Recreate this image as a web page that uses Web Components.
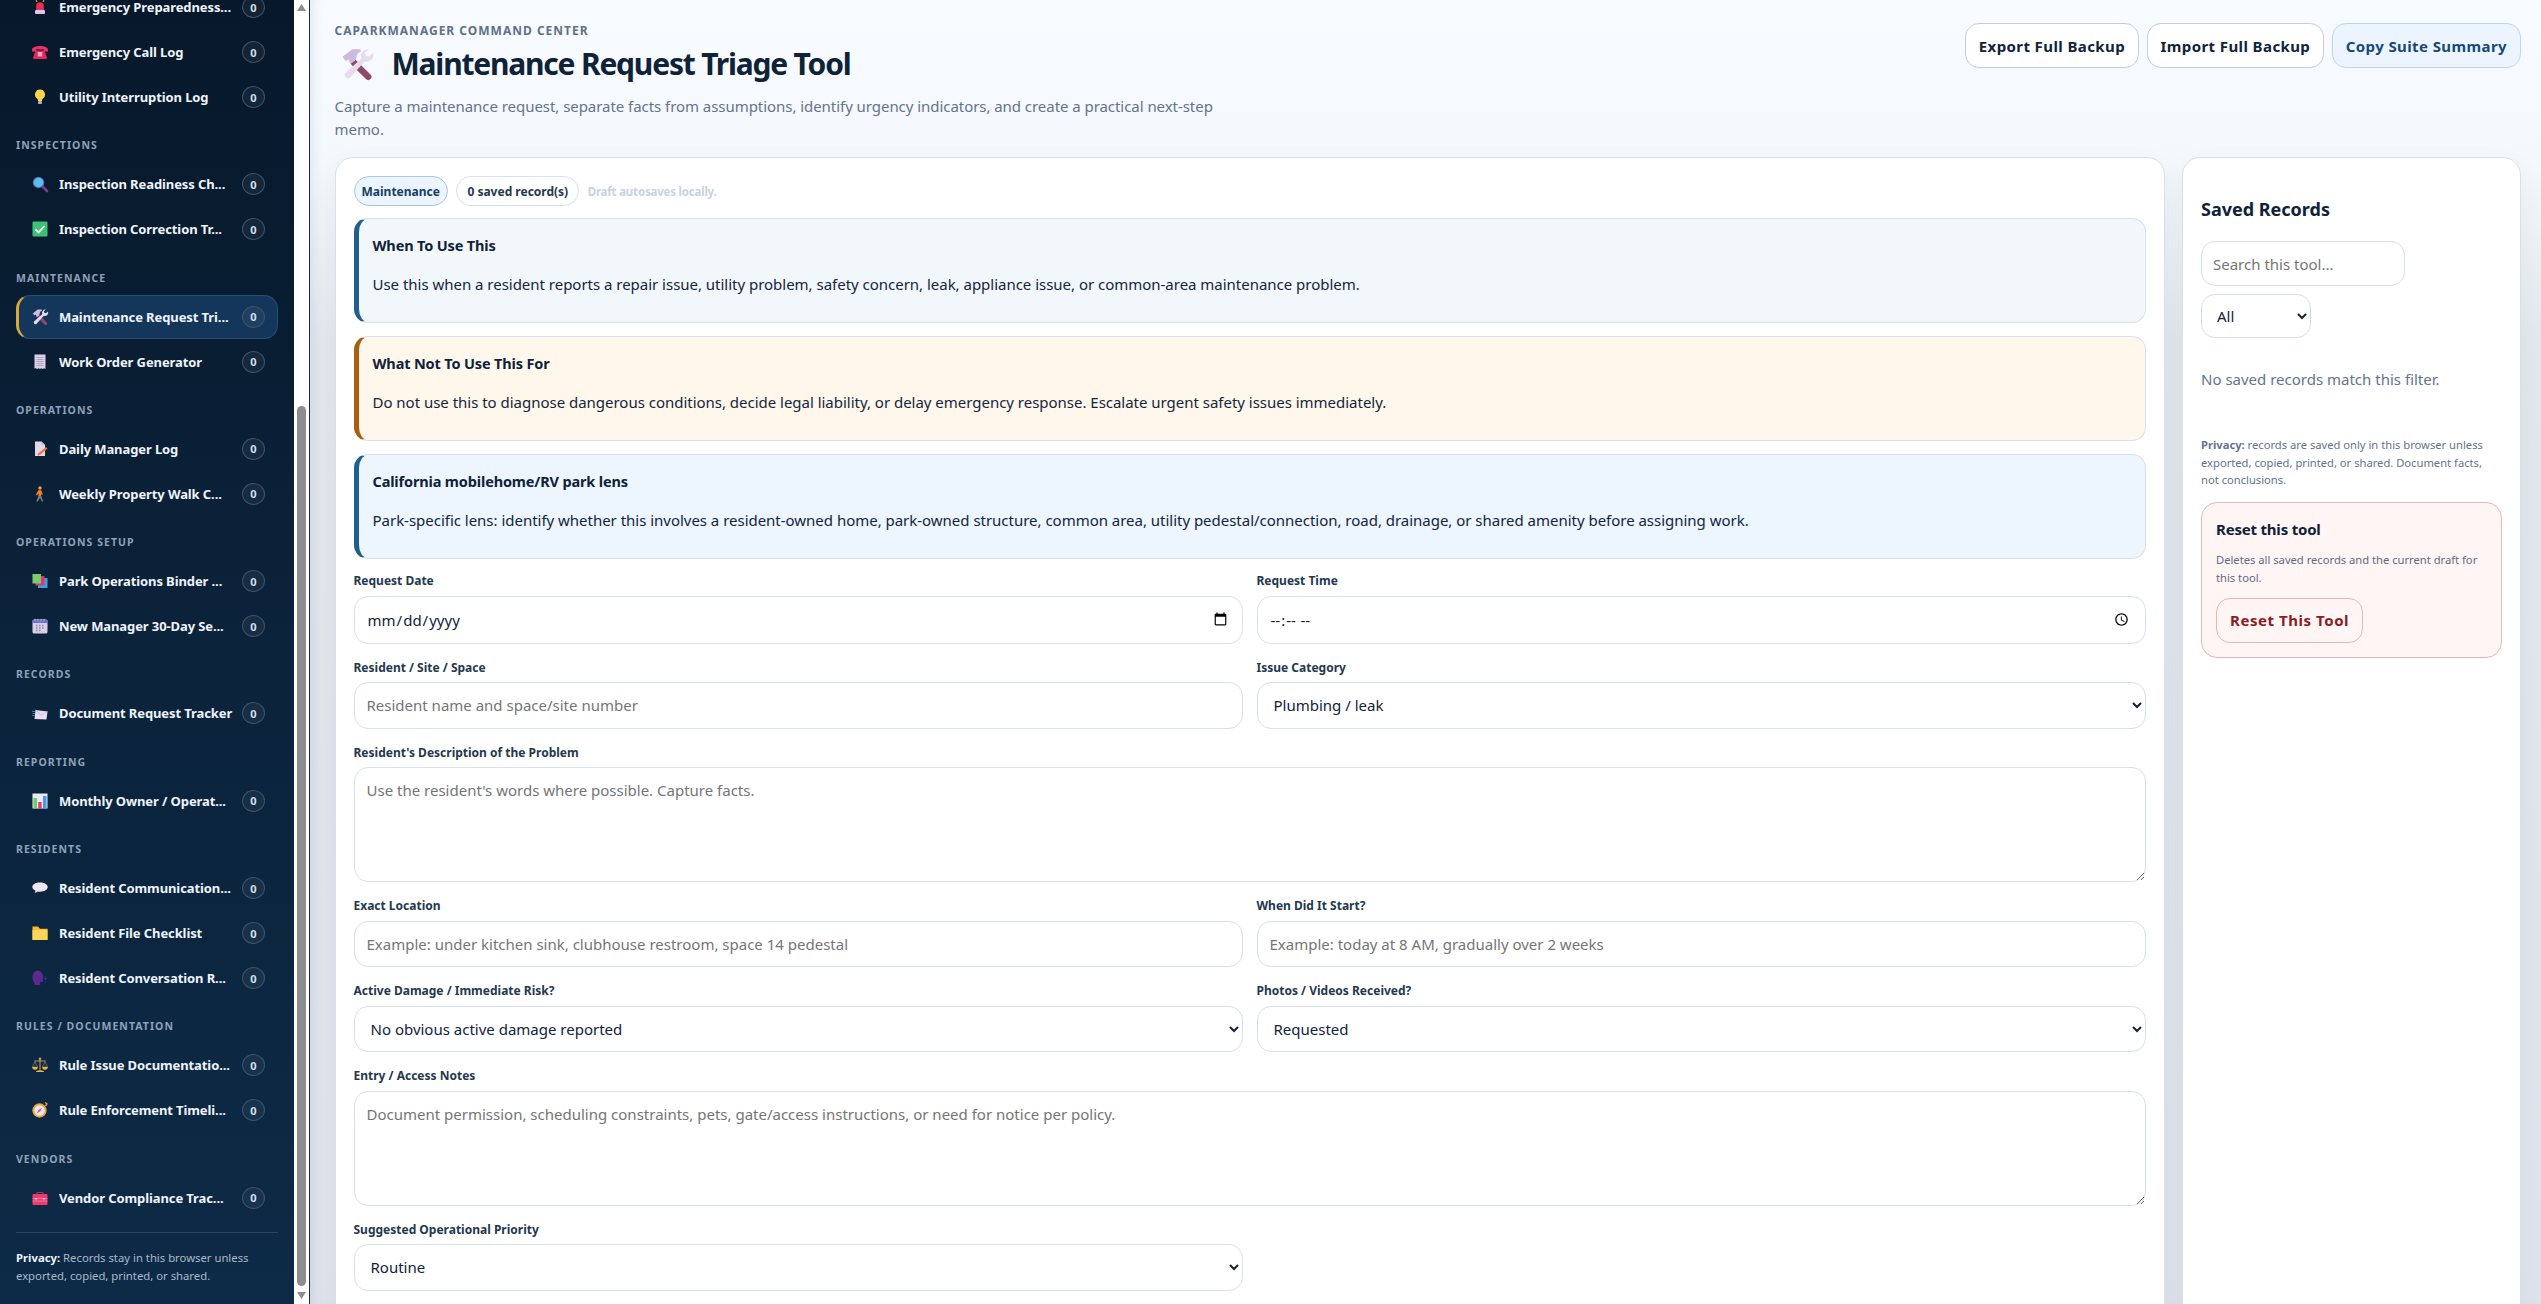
<!DOCTYPE html>
<html lang="en">
<head>
<meta charset="utf-8">
<title>Maintenance Request Triage Tool</title>
<style>
  html, body { margin: 0; height: 100%; overflow: hidden; }
  body { font-family: "Noto Sans", "Open Sans", sans-serif; color: #10233a; }
</style>
</head>
<body>
<app-shell></app-shell>

<script>
const ICONS = {
  siren: `<path d="M4 1l1 2M12 1l-1 2M8 -2v3" stroke="#f5c33b" stroke-width="1"/><path d="M4.2 11V7a3.8 3.8 0 0 1 7.6 0v4z" fill="#ea2d55"/><rect x="3" y="11" width="10" height="4" rx="1" fill="#d9c6ee"/>`,
  phone: `<path d="M0 6c0-3 4-4 8-4s8 1 8 4v1.5h-4.2V5.6H4.2v1.9H0z" fill="#ef2f68"/><path d="M3.4 6.5h9.2L15 14a1 1 0 0 1-1 1H2a1 1 0 0 1-1-1z" fill="#e8265e"/><rect x="5.8" y="8" width="4.4" height="4.4" fill="#f7a8c0"/>`,
  bulb: `<path d="M8 .5a5 5 0 0 0-3 9c.8.7 1 1.4 1 2.5h4c0-1.1.2-1.8 1-2.5a5 5 0 0 0-3-9z" fill="#fbd34c"/><rect x="6" y="12" width="4" height="3" rx=".8" fill="#b8a9b8"/>`,
  search: `<path d="M10 10l5 5" stroke="#7b3f8f" stroke-width="2.6" stroke-linecap="round"/><circle cx="6.5" cy="6.5" r="5.8" fill="#6f5bb5"/><circle cx="6.5" cy="6.5" r="4.7" fill="#52c3ee"/>`,
  check: `<rect x=".5" y=".5" width="15" height="15" rx="1" fill="#3cc274"/><path d="M3.5 8.4l3 3 6-6.4" fill="none" stroke="#fff" stroke-width="1.8"/>`,
  tools: `<path d="M6.4 7.2L13.6 14.4" stroke="#8d4a68" stroke-width="3.2" stroke-linecap="round"/><path d="M.8 4.4L5.6.6l4 0 .4 1.2-1.6.8L7 6.4 4.8 8 3.6 5.6 2.4 6.6z" fill="#cdbbdf"/><path d="M13.8.6a3.4 3.4 0 0 0-3.6 4.6L2 12.6a1.8 1.8 0 0 0 2.4 2.4l7.4-8.2a3.4 3.4 0 0 0 4.2-4.4l-2 1.8-1.7-.4-.4-1.6z" fill="#e6dcf0"/>`,
  receipt: `<path d="M2.5 .5h11V15l-1.4-.8-1.4.8-1.4-.8-1.3.8-1.4-.8-1.4.8-1.4-.8H1.5a1 1 0 0 0 1-1z" fill="#d9cfe6"/><path d="M4.5 3.5h7M4.5 5.5h7M4.5 7.5h7M4.5 9.5h7M4.5 11.5h7" stroke="#9d93ad" stroke-width=".7"/>`,
  memo: `<path d="M3 .5h6.5L13 4v11H3z" fill="#e4d9ec"/><path d="M9.5.5V4H13z" fill="#c8bbd6"/><path d="M6 12.5l8-6.5 1.5 1.5L8 14l-2.4.6z" fill="#f4733a"/>`,
  walk: `<circle cx="8" cy="2" r="1.7" fill="#f2a13a"/><path d="M6.2 4.2h3.2l1.4 4.4-1.3.4-.5-1.6v2.6H6.5V7.4l-1.6 2-1-.7z" fill="#ef7f1f"/><path d="M6.5 10h2.7l2 5.5h-1.4L8 11.8l-2.2 3.7H4.2z" fill="#857a8a"/>`,
  books: `<rect x="6" y="5" width="9.5" height="10" fill="#3f9fe6"/><rect x="3.5" y="3" width="9" height="9.5" fill="#e0356f"/><rect x=".5" y="1" width="8.5" height="9.5" fill="#78cf6a"/>`,
  calendar: `<rect x=".5" y="1.5" width="15" height="14" rx="1.5" fill="#d9cfe6"/><path d="M.5 3a1.5 1.5 0 0 1 1.5-1.5h12A1.5 1.5 0 0 1 15.5 3v2H.5z" fill="#6c74c8"/><path d="M3 .8v2.4M6 .8v2.4M9 .8v2.4M12 .8v2.4" stroke="#cfc8e0" stroke-width=".8"/><path d="M4 7.5h1.5M7 7.5h1.5M10 7.5h1.5M4 10h1.5M7 10h1.5M10 10h1.5M4 12.5h1.5M7 12.5h1.5" stroke="#8d88a8" stroke-width="1.4"/>`,
  envelope: `<path d="M3.5 5L15.5 6.5l-1 8L2.5 14z" fill="#eadcf2"/><path d="M3.5 5l5.5 5 6.5-3.5" fill="none" stroke="#c8b4d6" stroke-width=".7"/><path d="M.2 6.5h3M.5 8.5h2.5M.2 10.5h2.5" stroke="#3b9ecf" stroke-width=".8"/>`,
  chart: `<rect x=".5" y=".5" width="15" height="15" fill="#eee8f2"/><rect x="1.5" y="5" width="3.5" height="10.5" fill="#6ccf62"/><rect x="6.2" y="9" width="3.5" height="6.5" fill="#ea3a7a"/><rect x="11" y="3" width="3.5" height="12.5" fill="#3f9fe6"/>`,
  bubble: `<path d="M8 2.5c4.4 0 7.7 2 7.7 4.6S12.4 11.8 8 11.8c-.8 0-1.5 0-2.3-.2-.9.8-2 1.2-3.200 1.200.6-.6 1-1.300 1-2.100C1.500 9.800.3 8.600.3 7.100.3 4.500 3.600 2.500 8 2.500z" fill="#efe6f6"/>`,
  folder: `<path d="M.5 1.5h5.5l2 2.2h7.5v11.3H.5z" fill="#f5b82e"/><rect x=".5" y="4.8" width="15" height="10.2" fill="#fdd35c"/>`,
  head: `<path d="M5.5.8c3.5 0 5.2 2.2 5.2 4.7l1 2.7-1 .6.2 2.3c0 .9-.8 1.2-2.9 1l.3 2.9H2.5l-.2-2.6C.8 11 .2 8.8.5 6.2.9 2.8 2.8.8 5.5.8z" fill="#5a2a91"/><path d="M12.5 6.5l1.5.8M12.5 10l1.5-.8M12.5 8.3h2.5M12.7 12l1 .8" stroke="#5a2a91" stroke-width=".9"/>`,
  scales: `<path d="M8 1.5v12" stroke="#a88a5a" stroke-width="1.3"/><path d="M2.5 4h11" stroke="#b89a68" stroke-width="1"/><circle cx="8" cy="1.8" r="1.2" fill="#c4a472"/><path d="M3 4.5L.5 10h5zM13 4.5L10.500 10h5z" fill="none" stroke="#c4a472" stroke-width=".5"/><path d="M.3 10h5.400a2.700 2.700 0 0 1-5.400 0zM10.300 10h5.400a2.700 2.700 0 0 1-5.400 0z" fill="#f6b93b"/><path d="M4 15a4 1.800 0 0 1 8 0z" fill="#f6b93b"/>`,
  compass: `<circle cx="7.5" cy="8.5" r="7.2" fill="#e8a33d"/><circle cx="7.5" cy="8.5" r="5.3" fill="#eee6ee"/><path d="M10.2 5.8L8.3 9.3 4.8 11.200 6.700 7.700z" fill="#c8607a"/><path d="M13 .5l2 1.500-1.500 2" fill="none" stroke="#e8a33d" stroke-width="1.3"/>`,
  toolbox: `<path d="M5 4V2.5h6V4" fill="none" stroke="#9a3b5b" stroke-width="1.2"/><rect x=".5" y="4" width="15" height="11" rx="1" fill="#ec3b73"/><path d="M.5 8.5h15M.5 11h15" stroke="#f58fae" stroke-width=".7"/><rect x="3" y="8" width="2" height="1.5" fill="#f9c0d2"/><rect x="11" y="8" width="2" height="1.5" fill="#f9c0d2"/>`
};

class EmojiIcon extends HTMLElement {
  connectedCallback() {
    const size = this.getAttribute('size') || 16;
    const body = ICONS[this.getAttribute('name')] || '';
    this.attachShadow({ mode: 'open' });
    this.shadowRoot.innerHTML = `
      <style>:host { display: inline-flex; flex: none; width: ${size}px; height: ${size}px; } svg { display: block; overflow: visible; }</style>
      <svg width="${size}" height="${size}" viewBox="0 0 16 16">${body}</svg>`;
  }
}

class NavItem extends HTMLElement {
  connectedCallback() {
    this.attachShadow({ mode: 'open' });
    this.shadowRoot.innerHTML = `
      <style>
        :host {
          display: flex; align-items: center; height: 44px; box-sizing: border-box;
          padding: 0 12px 0 15px; border: 1px solid transparent; border-radius: 14px;
          color: #eef4fa; font-size: 13px; font-weight: 700; letter-spacing: -.1px;
        }
        :host([active]) { background: #14365a; border-color: #21507a; border-left: 3px solid #d9a83c; padding-left: 13px; }
        .label { flex: 1; margin-left: 11px; white-space: nowrap; overflow: hidden; }
        .count {
          flex: none; width: 23px; height: 22px; box-sizing: border-box; border-radius: 50%;
          border: 1px solid #3d5268; background: rgba(255,255,255,.05);
          display: flex; align-items: center; justify-content: center;
          font-size: 11px; letter-spacing: 0; color: #d5e0ea;
        }
      </style>
      <emoji-icon name="${this.getAttribute('icon')}"></emoji-icon>
      <span class="label">${this.getAttribute('label')}</span>
      <span class="count">0</span>`;
  }
}

class NavGroup extends HTMLElement {
  connectedCallback() {
    this.attachShadow({ mode: 'open' });
    this.shadowRoot.innerHTML = `
      <style>
        :host { display: flex; flex-direction: column; gap: 1px; margin-bottom: 19.3px; }
        :host([headless]) h3 { display: none; }
        h3 {
          margin: 0 0 9px; font-size: 10.5px; line-height: 14px; font-weight: 700;
          text-transform: uppercase; letter-spacing: 1.05px; color: #8ea2b8;
        }
      </style>
      <h3>${this.getAttribute('label') || ''}</h3>
      <slot></slot>`;
  }
}

class SideBar extends HTMLElement {
  connectedCallback() {
    this.attachShadow({ mode: 'open' });
    this.shadowRoot.innerHTML = `
      <style>
        :host {
          display: block; width: 294px; height: 100%; box-sizing: border-box; overflow: hidden;
          background: linear-gradient(180deg, #07182a 0%, #0b233b 50%, #0d2a46 100%);
          padding: 0 16px;
        }
        .scroller { margin-top: -15px; }
        .privacy {
          border-top: 1px solid #2a4560; margin-top: -7px; padding-top: 16px;
          font-size: 11.3px; line-height: 18px; color: #a9bacb;
        }
        .privacy b { color: #eef4fa; }
      </style>
      <div class="scroller">
        <slot></slot>
        <div class="privacy"><b>Privacy:</b> Records stay in this browser unless exported, copied, printed, or shared.</div>
      </div>`;
  }
}

// the window scrollbar of the sidebar, drawn because headless hides the real one
class BarTrack extends HTMLElement {
  connectedCallback() {
    this.attachShadow({ mode: 'open' });
    this.shadowRoot.innerHTML = `
      <style>
        :host {
          display: flex; flex-direction: column; width: 16px; height: 100%; box-sizing: border-box;
          background: #fff; border-right: 1px solid #1d2c44; padding: 4px 3px 5px 3px;
        }
        svg { display: block; flex: none; }
        .gap { height: 395px; flex: none; }
        .thumb { width: 9px; height: 880px; flex: none; background: #8d8d8d; border-radius: 5px; }
        .rest { flex: 1; }
      </style>
      <svg width="9" height="7" viewBox="0 0 9 7"><path d="M4.5 0L9 7H0z" fill="#8d8d8d"/></svg>
      <div class="gap"></div>
      <div class="thumb"></div>
      <div class="rest"></div>
      <svg width="9" height="7" viewBox="0 0 9 7"><path d="M0 0h9L4.5 7z" fill="#8d8d8d"/></svg>`;
  }
}

class PageHeader extends HTMLElement {
  connectedCallback() {
    this.attachShadow({ mode: 'open' });
    this.shadowRoot.innerHTML = `
      <style>
        :host { display: flex; justify-content: space-between; align-items: flex-start; height: 134px; }
        .eyebrow {
          margin-top: 1px; font-size: 12px; line-height: 14px; font-weight: 700; letter-spacing: 1px;
          text-transform: uppercase; color: #5e7186;
        }
        h1 {
          display: flex; align-items: center; gap: 19px; margin: 5px 0 0 6px;
          font-size: 30px; line-height: 42px; font-weight: 700; letter-spacing: -1.2px; color: #0e2238;
        }
        p {
          margin: 10px 0 0; max-width: 900px; font-size: 15px; line-height: 23px;
          color: #64748b; letter-spacing: -.05px;
        }
        .actions { display: flex; gap: 8.5px; }
      </style>
      <div>
        <div class="eyebrow">CAParkManager Command Center</div>
        <h1><emoji-icon name="tools" size="32"></emoji-icon>Maintenance Request Triage Tool</h1>
        <p>Capture a maintenance request, separate facts from assumptions, identify urgency indicators, and create a practical next-step memo.</p>
      </div>
      <div class="actions"><slot></slot></div>`;
  }
}

class ActionButton extends HTMLElement {
  connectedCallback() {
    this.attachShadow({ mode: 'open' });
    this.shadowRoot.innerHTML = `
      <style>
        :host {
          display: inline-flex; align-items: center; height: 45px; box-sizing: border-box; padding: 0 12.5px;
          border: 1px solid #c3ced9; border-radius: 14px; background: #fff;
          font-size: 15px; font-weight: 700; letter-spacing: .4px; color: #10233a; white-space: nowrap;
        }
        :host([tone="soft"]) { background: #ecf5ff; border-color: #bdd6ee; color: #174a72; }
        :host([tone="danger"]) { background: #fff5f5; border-color: #e8b6b8; color: #8a1c22; letter-spacing: .55px; padding: 0 13px; }
      </style>
      <slot></slot>`;
  }
}

class CardPanel extends HTMLElement {
  connectedCallback() {
    this.attachShadow({ mode: 'open' });
    this.shadowRoot.innerHTML = `
      <style>
        :host {
          display: block; box-sizing: border-box; min-height: 1300px; padding: 18px;
          background: #fff; border: 1px solid #d8e0ea; border-radius: 18px;
          box-shadow: 0 10px 30px rgba(20,40,70,.05);
        }
      </style>
      <slot></slot>`;
  }
}

class PillBar extends HTMLElement {
  connectedCallback() {
    this.attachShadow({ mode: 'open' });
    this.shadowRoot.innerHTML = `
      <style>
        :host { display: flex; align-items: center; gap: 8.5px; height: 30px; margin-bottom: 12px; font-size: 12px; font-weight: 700; }
        span { display: inline-flex; align-items: center; box-sizing: border-box; height: 30px; border-radius: 15px; }
        .tag { background: #ecf5ff; border: 1px solid #a9c8e0; color: #14405f; padding: 0 7px; }
        .count { background: #fff; border: 1px solid #d8e0ea; color: #24384e; padding: 0 10px; }
        em { font-style: normal; font-size: 11.5px; letter-spacing: -.2px; color: #c7d3df; }
      </style>
      <span class="tag">Maintenance</span>
      <span class="count">0 saved record(s)</span>
      <em>Draft autosaves locally.</em>`;
  }
}

class NoticeBox extends HTMLElement {
  connectedCallback() {
    this.attachShadow({ mode: 'open' });
    this.shadowRoot.innerHTML = `
      <style>
        :host {
          display: block; box-sizing: border-box; height: 105px; margin-bottom: 13px; padding: 16px 14px 0;
          background: #f2f7fb; border: 1px solid #d8e0ea; border-left: 5px solid #1f5f8b; border-radius: 14px;
        }
        :host([tone="warn"]) { background: #fff7ec; border-left-color: #a85f12; }
        :host([tone="info"]) { background: #edf5fe; }
        h4 { margin: 0 0 18px; font-size: 14.5px; line-height: 20px; font-weight: 700; letter-spacing: -.15px; color: #0e2238; }
        p { margin: 0; font-size: 15px; line-height: 22px; letter-spacing: -.02px; color: #13263c; }
      </style>
      <h4>${this.getAttribute('heading')}</h4>
      <p><slot></slot></p>`;
  }
}

class FormField extends HTMLElement {
  connectedCallback() {
    const type = this.getAttribute('type') || 'text';
    const hint = this.getAttribute('hint') || '';
    let control;
    if (type === 'textarea') control = `<textarea placeholder="${hint}"></textarea>`;
    else if (type === 'select') control = `<select><option>${this.getAttribute('value')}</option></select>`;
    else control = `<input type="${type}" placeholder="${hint}">`;
    this.attachShadow({ mode: 'open' });
    this.shadowRoot.innerHTML = `
      <style>
        :host { display: flex; flex-direction: column; gap: 6.5px; min-width: 0; }
        :host([wide]) { grid-column: 1 / -1; }
        label { font-size: 12px; line-height: 16px; font-weight: 700; color: #24384e; }
        input, select, textarea {
          box-sizing: border-box; width: 100%; height: 46.5px; padding: 0 12px; margin: 0; display: block;
          border: 1px solid #d8e0ea; border-radius: 14px; background: #fff; outline: none;
          font: 15px "Noto Sans", "Open Sans", sans-serif; color: #10233a;
        }
        input[type=date], input[type=time] { height: 48px; }
        textarea { height: 115px; padding: 12px; line-height: 20px; resize: vertical; }
        ::placeholder { color: #757575; opacity: 1; }
      </style>
      <label>${this.getAttribute('label')}</label>
      ${control}`;
  }
}

class FormGrid extends HTMLElement {
  connectedCallback() {
    this.attachShadow({ mode: 'open' });
    this.shadowRoot.innerHTML = `
      <style>:host { display: grid; grid-template-columns: 1fr 1fr; column-gap: 14px; row-gap: 16px; margin-top: 14px; }</style>
      <slot></slot>`;
  }
}

class RecordsPanel extends HTMLElement {
  connectedCallback() {
    this.attachShadow({ mode: 'open' });
    this.shadowRoot.innerHTML = `
      <style>
        :host { display: block; font-size: 14px; color: #64748b; }
        h3 { margin: 20.5px 0 20.5px; font-size: 18px; line-height: 24px; font-weight: 700; color: #0e2238; }
        input, select {
          display: block; box-sizing: border-box; width: 204px; height: 45px; padding: 0 11px;
          border: 1px solid #d8e0ea; border-radius: 14px; background: #fff; outline: none;
          font: 15px "Noto Sans", "Open Sans", sans-serif; color: #10233a;
        }
        select { width: 110px; height: 44px; margin-top: 8px; }
        ::placeholder { color: #757575; opacity: 1; }
        .empty { margin: 30px 0 0; line-height: 22px; font-size: 15px; }
        .privacy { margin: 46px 0 0; font-size: 11.2px; line-height: 17.5px; }
        .reset {
          margin-top: 13px; padding: 14px; box-sizing: border-box; height: 156px;
          background: #fff5f5; border: 1px solid #e8b6b8; border-radius: 16px;
        }
        h4 { margin: 2px 0 12px; font-size: 15px; line-height: 20px; font-weight: 700; letter-spacing: -.2px; color: #0e2238; }
        .reset p { margin: 0 0 11px; font-size: 11.2px; line-height: 18px; color: #5e6b80; }
      </style>
      <h3>Saved Records</h3>
      <input placeholder="Search this tool...">
      <select><option>All</option></select>
      <p class="empty">No saved records match this filter.</p>
      <p class="privacy"><b>Privacy:</b> records are saved only in this browser unless exported, copied, printed, or shared. Document facts, not conclusions.</p>
      <div class="reset">
        <h4>Reset this tool</h4>
        <p>Deletes all saved records and the current draft for this tool.</p>
        <action-button tone="danger">Reset This Tool</action-button>
      </div>`;
  }
}

class AppShell extends HTMLElement {
  connectedCallback() {
    this.attachShadow({ mode: 'open' });
    this.shadowRoot.innerHTML = `
      <style>
        :host { display: flex; height: 100vh; overflow: hidden; }
        main {
          flex: 1; min-width: 0; box-sizing: border-box; height: 100%; overflow: hidden; padding: 23px 20.5px 0 24.500px;
          background: linear-gradient(180deg, #f8fbff 0%, #f4f8fc 13%, #e3e8ee 26%, #dfe4ec 100%);
          box-shadow: inset 10px 0 12px -8px rgba(20,40,70,.10);
        }
        .content { display: grid; grid-template-columns: minmax(0, 1fr) 338.5px; gap: 17.5px; }
      </style>
      <side-bar>
        <nav-group headless>
          <nav-item icon="siren" label="Emergency Preparedness..."></nav-item>
          <nav-item icon="phone" label="Emergency Call Log"></nav-item>
          <nav-item icon="bulb" label="Utility Interruption Log"></nav-item>
        </nav-group>
        <nav-group label="Inspections">
          <nav-item icon="search" label="Inspection Readiness Ch..."></nav-item>
          <nav-item icon="check" label="Inspection Correction Tr..."></nav-item>
        </nav-group>
        <nav-group label="Maintenance">
          <nav-item icon="tools" label="Maintenance Request Tri..." active></nav-item>
          <nav-item icon="receipt" label="Work Order Generator"></nav-item>
        </nav-group>
        <nav-group label="Operations">
          <nav-item icon="memo" label="Daily Manager Log"></nav-item>
          <nav-item icon="walk" label="Weekly Property Walk C..."></nav-item>
        </nav-group>
        <nav-group label="Operations Setup">
          <nav-item icon="books" label="Park Operations Binder ..."></nav-item>
          <nav-item icon="calendar" label="New Manager 30-Day Se..."></nav-item>
        </nav-group>
        <nav-group label="Records">
          <nav-item icon="envelope" label="Document Request Tracker"></nav-item>
        </nav-group>
        <nav-group label="Reporting">
          <nav-item icon="chart" label="Monthly Owner / Operat..."></nav-item>
        </nav-group>
        <nav-group label="Residents">
          <nav-item icon="bubble" label="Resident Communication..."></nav-item>
          <nav-item icon="folder" label="Resident File Checklist"></nav-item>
          <nav-item icon="head" label="Resident Conversation R..."></nav-item>
        </nav-group>
        <nav-group label="Rules / Documentation">
          <nav-item icon="scales" label="Rule Issue Documentatio..."></nav-item>
          <nav-item icon="compass" label="Rule Enforcement Timeli..."></nav-item>
        </nav-group>
        <nav-group label="Vendors">
          <nav-item icon="toolbox" label="Vendor Compliance Trac..."></nav-item>
        </nav-group>
      </side-bar>
      <bar-track></bar-track>
      <main>
        <page-header>
          <action-button>Export Full Backup</action-button>
          <action-button>Import Full Backup</action-button>
          <action-button tone="soft">Copy Suite Summary</action-button>
        </page-header>
        <div class="content">
          <card-panel>
            <pill-bar></pill-bar>
            <notice-box heading="When To Use This">Use this when a resident reports a repair issue, utility problem, safety concern, leak, appliance issue, or common-area maintenance problem.</notice-box>
            <notice-box tone="warn" heading="What Not To Use This For">Do not use this to diagnose dangerous conditions, decide legal liability, or delay emergency response. Escalate urgent safety issues immediately.</notice-box>
            <notice-box tone="info" heading="California mobilehome/RV park lens">Park-specific lens: identify whether this involves a resident-owned home, park-owned structure, common area, utility pedestal/connection, road, drainage, or shared amenity before assigning work.</notice-box>
            <form-grid>
              <form-field label="Request Date" type="date"></form-field>
              <form-field label="Request Time" type="time"></form-field>
              <form-field label="Resident / Site / Space" hint="Resident name and space/site number"></form-field>
              <form-field label="Issue Category" type="select" value="Plumbing / leak"></form-field>
              <form-field wide label="Resident's Description of the Problem" type="textarea" hint="Use the resident's words where possible. Capture facts."></form-field>
              <form-field label="Exact Location" hint="Example: under kitchen sink, clubhouse restroom, space 14 pedestal"></form-field>
              <form-field label="When Did It Start?" hint="Example: today at 8 AM, gradually over 2 weeks"></form-field>
              <form-field label="Active Damage / Immediate Risk?" type="select" value="No obvious active damage reported"></form-field>
              <form-field label="Photos / Videos Received?" type="select" value="Requested"></form-field>
              <form-field wide label="Entry / Access Notes" type="textarea" hint="Document permission, scheduling constraints, pets, gate/access instructions, or need for notice per policy."></form-field>
              <form-field label="Suggested Operational Priority" type="select" value="Routine"></form-field>
            </form-grid>
          </card-panel>
          <card-panel><records-panel></records-panel></card-panel>
        </div>
      </main>`;
  }
}

customElements.define('emoji-icon', EmojiIcon);
customElements.define('nav-item', NavItem);
customElements.define('nav-group', NavGroup);
customElements.define('side-bar', SideBar);
customElements.define('bar-track', BarTrack);
customElements.define('action-button', ActionButton);
customElements.define('page-header', PageHeader);
customElements.define('card-panel', CardPanel);
customElements.define('pill-bar', PillBar);
customElements.define('notice-box', NoticeBox);
customElements.define('form-field', FormField);
customElements.define('form-grid', FormGrid);
customElements.define('records-panel', RecordsPanel);
customElements.define('app-shell', AppShell);
</script>
</body>
</html>
